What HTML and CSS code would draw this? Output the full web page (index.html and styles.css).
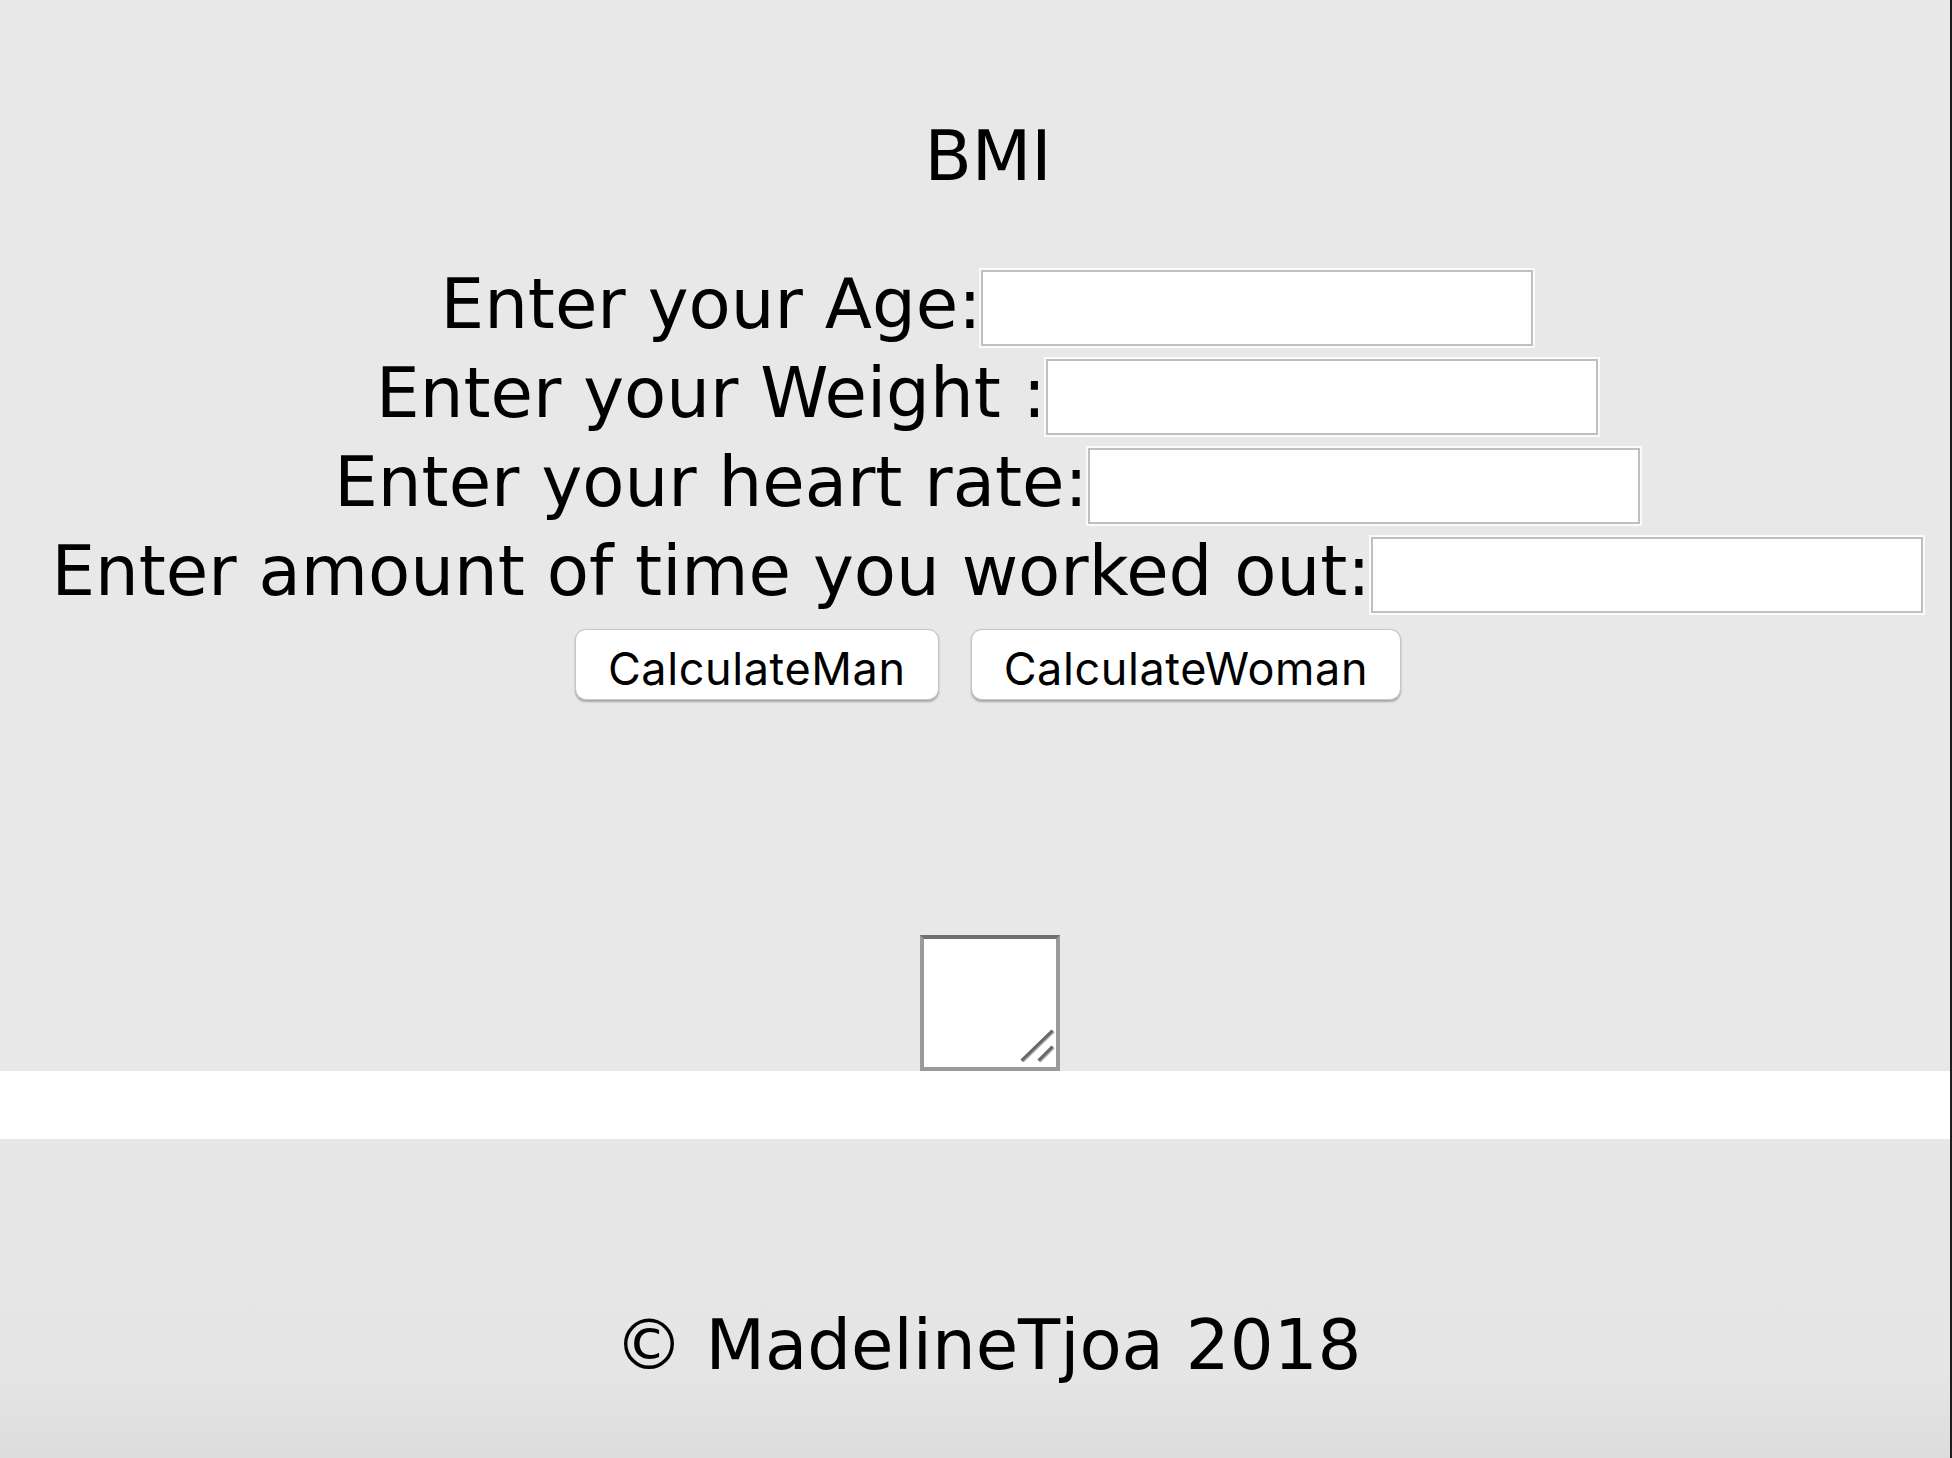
FILE: index.html
```html
<!DOCTYPE html>
<html lang="en">
<head>
<meta charset="utf-8">
<title>BMI</title>
<link rel="stylesheet" href="styles.css">
</head>
<body>
<div class="page">
  <main class="main">
    <h1 class="title">BMI</h1>
    <form class="form">
      <div class="row"><label class="label" for="age">Enter your Age:</label><input class="field" id="age" type="text"></div>
      <div class="row"><label class="label" for="weight">Enter your Weight :</label><input class="field" id="weight" type="text"></div>
      <div class="row"><label class="label" for="hr">Enter your heart rate:</label><input class="field" id="hr" type="text"></div>
      <div class="row"><label class="label" for="time">Enter amount of time you worked out:</label><input class="field" id="time" type="text"></div>
      <div class="buttons">
        <button class="btn" type="button">CalculateMan</button>
        <button class="btn" type="button">CalculateWoman</button>
      </div>
    </form>
    <div class="output-row">
      <div class="output-wrap">
        <textarea class="output"></textarea>
        <svg class="grip" width="40" height="40" viewBox="0 0 40 40" aria-hidden="true">
          <line x1="6.5" y1="34.5" x2="37.5" y2="4.5" stroke="#a8a8a8" stroke-width="3"/>
          <line x1="23.5" y1="34.5" x2="37.5" y2="20.5" stroke="#a8a8a8" stroke-width="3"/>
          <line x1="5.5" y1="33.5" x2="36.5" y2="3.5" stroke="#686868" stroke-width="3"/>
          <line x1="22.5" y1="33.5" x2="36.5" y2="19.5" stroke="#686868" stroke-width="3"/>
        </svg>
      </div>
    </div>
  </main>
  <div class="band"></div>
  <footer class="footer">© MadelineTjoa 2018</footer>
</div>
</body>
</html>
```

FILE: styles.css
```css
html, body {
  margin: 0;
  padding: 0;
}

body {
  background: #e8e8e8;
  font-family: "DejaVu Sans", Verdana, sans-serif;
  color: #000;
  overflow: hidden;
}

.page {
  box-sizing: border-box;
  width: 1952px;
  height: 1458px;
  border-right: 2px solid #1e1e1e;
  display: flex;
  flex-direction: column;
}

.main {
  padding-left: 26px;
  height: 1071px;
  box-sizing: border-box;
}

.title {
  margin: 0;
  padding-top: 116px;
  font-size: 69px;
  font-weight: normal;
  line-height: 80px;
  text-align: center;
  height: 268px;
  box-sizing: border-box;
}

.form {
  margin: 0;
  display: flex;
  flex-direction: column;
  gap: 9px;
}

.row {
  display: flex;
  justify-content: center;
  align-items: flex-start;
  height: 80px;
}

.label {
  font-size: 69px;
  line-height: 72px;
  white-space: nowrap;
}

.field {
  box-sizing: border-box;
  width: 552px;
  height: 76px;
  margin: 2px 2px 2px 0;
  border: 2px solid #bfbfbf;
  box-shadow: 0 0 0 2px #fbfbfb;
  background: #fff;
  padding: 0;
  outline: none;
}

.buttons {
  display: flex;
  justify-content: center;
  gap: 32px;
  margin-top: 5px;
}

.btn {
  box-sizing: border-box;
  height: 71px;
  padding: 8px 32px 0;
  font-family: Inter, "Liberation Sans", sans-serif;
  font-size: 45px;
  letter-spacing: 0.6px;
  line-height: 61px;
  color: #000;
  background: #fff;
  border: 1px solid #c6c6c6;
  border-radius: 11px;
  box-shadow: 0 1.5px 2px rgba(0, 0, 0, 0.28);
}

.output-row {
  display: flex;
  justify-content: center;
  margin-top: 235px;
}

.output-wrap {
  position: relative;
  width: 140px;
  height: 136px;
  margin-left: 4px;
}

.output {
  display: block;
  box-sizing: border-box;
  width: 140px;
  height: 136px;
  margin: 0;
  padding: 0;
  border: 4px solid #9a9a9a;
  border-top-color: #6f6f6f;
  background: #fff;
  resize: none;
  outline: none;
}

.grip {
  position: absolute;
  right: 4px;
  bottom: 4px;
}

.band {
  height: 68px;
  background: #fff;
}

.footer {
  flex: 1;
  padding-top: 166px;
  padding-left: 26px;
  box-sizing: border-box;
  font-size: 69px;
  line-height: 80px;
  text-align: center;
  background: linear-gradient(to bottom, #e7e7e7 0%, #e5e5e5 75%, #dcdcdc 100%);
}
```
